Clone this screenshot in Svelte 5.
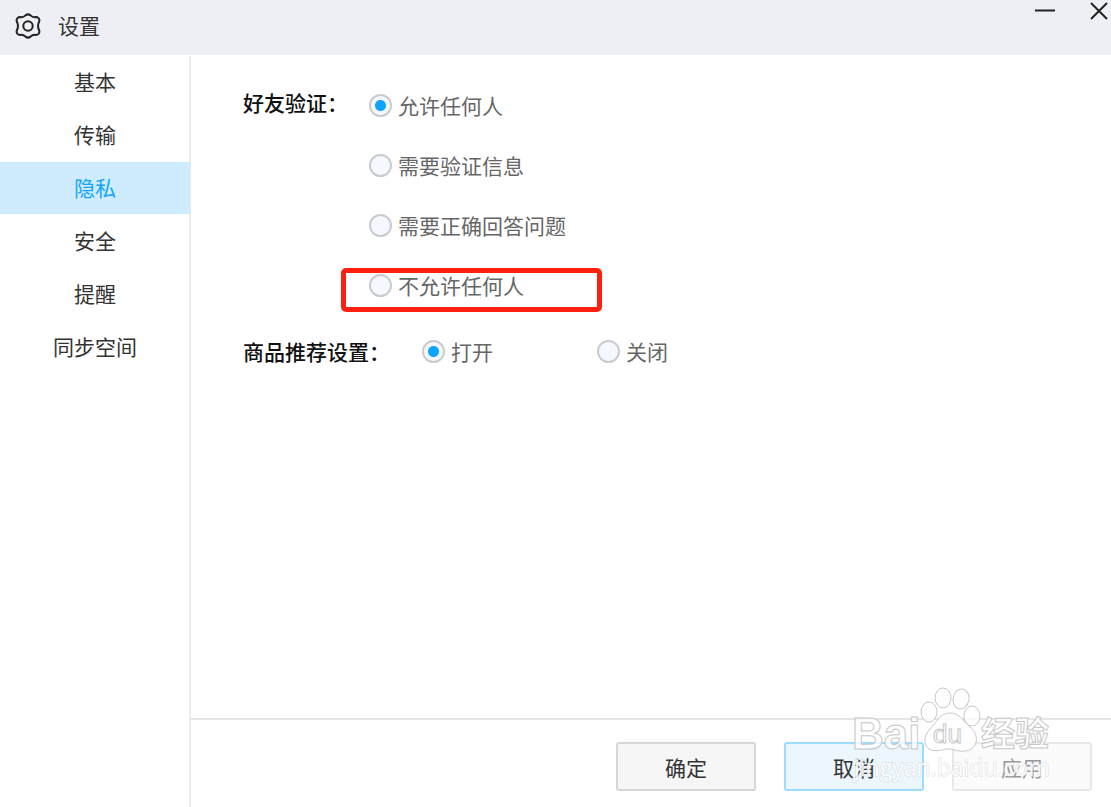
<script lang="ts">
	const tabs = ['基本', '传输', '隐私', '安全', '提醒', '同步空间'];
	const verifyOptions = ['允许任何人', '需要验证信息', '需要正确回答问题', '不允许任何人'];
	const recommendOptions = ['打开', '关闭'];

	let tab = $state('隐私');
	let verify = $state('允许任何人');
	let recommend = $state('打开');
</script>

<div class="window">
	<header>
		<svg class="gear" viewBox="0 0 28 28" width="28" height="28">
			<path d="M11.5 3.4 Q14 1.4 16.5 3.4 Q18.8 5.6 21.6 5.1 Q25.6 5.2 25.4 9 Q24 11.800 24 14 Q24 16.200 25.400 19 Q25.600 22.800 21.600 22.900 Q18.800 22.400 16.500 24.600 Q14 26.600 11.500 24.600 Q9.200 22.400 6.400 22.900 Q2.400 22.800 2.600 19 Q4 16.200 4 14 Q4 11.800 2.600 9 Q2.400 5.200 6.400 5.100 Q9.200 5.600 11.500 3.400 Z" />
			<circle cx="14" cy="14" r="4.700" />
		</svg>
		<h1>设置</h1>
		<div class="controls">
			<button aria-label="最小化">
				<svg viewBox="0 0 22 22" width="22" height="22"><path d="M1 10.500H21" /></svg>
			</button>
			<button aria-label="关闭窗口">
				<svg viewBox="0 0 22 22" width="22" height="22"><path d="M2 3L18 19M18 3L2 19" /></svg>
			</button>
		</div>
	</header>

	<div class="body">
		<nav>
			{#each tabs as name}
				<button class:active={tab === name} onclick={() => (tab = name)}>{name}</button>
			{/each}
		</nav>

		<div class="panel">
			<main>
				<div class="row" role="radiogroup" aria-labelledby="verify-label">
					<span class="title" id="verify-label">好友验证：</span>
					<div class="stack">
						{#each verifyOptions as option, i}
							<label class:marked={i === 3}>
								<input type="radio" name="verify" value={option} bind:group={verify} />
								{option}
							</label>
						{/each}
					</div>
				</div>
				<div class="row recommend" role="radiogroup" aria-labelledby="recommend-label">
					<span class="title" id="recommend-label">商品推荐设置：</span>
					<div class="inline">
						{#each recommendOptions as option}
							<label>
								<input type="radio" name="recommend" value={option} bind:group={recommend} />
								{option}
							</label>
						{/each}
					</div>
				</div>
			</main>

			<footer>
				<button>确定</button>
				<button class="focus">取消</button>
				<button disabled>应用</button>
			</footer>
		</div>
	</div>

	<svg class="watermark" viewBox="0 0 210 104" width="210" height="104">
		<g class="mark">
			<text x="0" y="63" font-size="44" font-weight="bold">Bai</text>
			<ellipse cx="77" cy="26" rx="8" ry="10" />
			<ellipse cx="91" cy="12" rx="8" ry="10" />
			<ellipse cx="109" cy="13" rx="8" ry="10" transform="rotate(12 109 13)" />
			<ellipse cx="120" cy="30" rx="8" ry="10" />
			<path d="M98 27 C108 27 111 35 118 41 C128 49 126 63 114 65 C106 66 102 63 97 63 C91 63 86 66 79 64 C71 61 71 50 78 43 C84 37 88 27 98 27 Z" />
			<text x="81" y="57" font-size="26">du</text>
			<text class="cjk" x="129" y="60" font-size="34" font-weight="bold">经验</text>
		</g>
		<text class="url" x="2" y="90" font-size="23">jingyan.baidu.com</text>
	</svg>
</div>

<style>
	:global(body) {
		margin: 0;
		background: #fff;
	}

	.window {
		position: relative;
		display: flex;
		flex-direction: column;
		min-height: 100vh;
		font-family: "Noto Sans CJK SC", sans-serif;
		font-size: 21px;
		line-height: 32px;
		color: #333;
	}

	button {
		font: inherit;
		color: inherit;
		padding: 0;
		border: none;
		background: none;
	}

	header {
		display: flex;
		align-items: center;
		height: 55px;
		padding-left: 14px;
		background: #eeeff5;
	}

	header svg {
		display: block;
		fill: none;
		stroke: #222;
		stroke-width: 2;
	}

	.gear {
		margin-bottom: 4px;
	}

	h1 {
		margin: 0 0 6px 16px;
		font-size: 21px;
		font-weight: 400;
	}

	.controls {
		display: flex;
		gap: 33px;
		align-self: flex-start;
		margin-left: auto;
	}

	.body {
		display: flex;
		flex: 1;
		padding-top: 1px;
	}

	nav {
		display: flex;
		flex-direction: column;
		flex: none;
		gap: 1px;
		width: 191px;
		box-sizing: border-box;
		border-right: 2px solid #ebebeb;
	}

	nav button {
		height: 52px;
		margin-right: -1px;
		padding-bottom: 2px;
	}

	nav .active {
		background: #cfecff;
		color: #12a5ff;
	}

	.panel {
		display: flex;
		flex-direction: column;
		flex: 1;
	}

	main {
		flex: 1;
		padding: 33px 52px;
	}

	.row {
		display: flex;
	}

	.title {
		color: #111;
		font-weight: 500;
		line-height: 26px;
	}

	.stack {
		display: flex;
		flex-direction: column;
		gap: 28px;
		margin-left: 21px;
	}

	.recommend {
		align-items: center;
		margin-top: 34px;
	}

	.inline {
		display: flex;
		gap: 104px;
		margin-left: 32px;
	}

	label {
		position: relative;
		display: flex;
		align-items: center;
		gap: 6px;
		color: #666;
	}

	input {
		appearance: none;
		width: 23px;
		height: 23px;
		margin: 0;
		border: 2px solid #c8cbd1;
		border-radius: 50%;
		background: #f5f9ff;
	}

	input:checked {
		background: radial-gradient(circle, #0fa4ff 5px, #f5f9ff 6px);
	}

	/* red frame around the option being pointed out */
	.marked::after {
		content: '';
		position: absolute;
		top: -1px;
		left: -28px;
		width: 251px;
		height: 34px;
		border: 5px solid #ff2011;
		border-radius: 5px;
	}

	footer {
		display: flex;
		justify-content: flex-end;
		gap: 28px;
		padding: 22px 19px 16px;
		border-top: 2px solid #e6e6e6;
	}

	footer button {
		width: 140px;
		height: 49px;
		border: 2px solid #d6d6d6;
		border-radius: 3px;
		background: #f6f6f6;
	}

	footer .focus {
		border-color: #9edcff;
		background: #ebf6fd;
	}

	footer button:disabled {
		border-color: #e8e8e8;
		background: #fbfbfb;
		color: #999;
	}

	.watermark {
		position: absolute;
		right: 49px;
		bottom: 17px;
		pointer-events: none;
		font-family: "Liberation Sans", sans-serif;
	}

	.mark {
		fill: #fff;
		fill-opacity: 0.8;
		stroke: #c8c8c8;
		stroke-width: 1;
	}

	.cjk {
		font-family: "Noto Sans CJK SC", sans-serif;
	}

	.url {
		fill: #fff;
		fill-opacity: 0.9;
		stroke: #ccc;
		stroke-opacity: 0.7;
		stroke-width: 1;
		paint-order: stroke;
		font-family: "Open Sans", sans-serif;
	}
</style>
